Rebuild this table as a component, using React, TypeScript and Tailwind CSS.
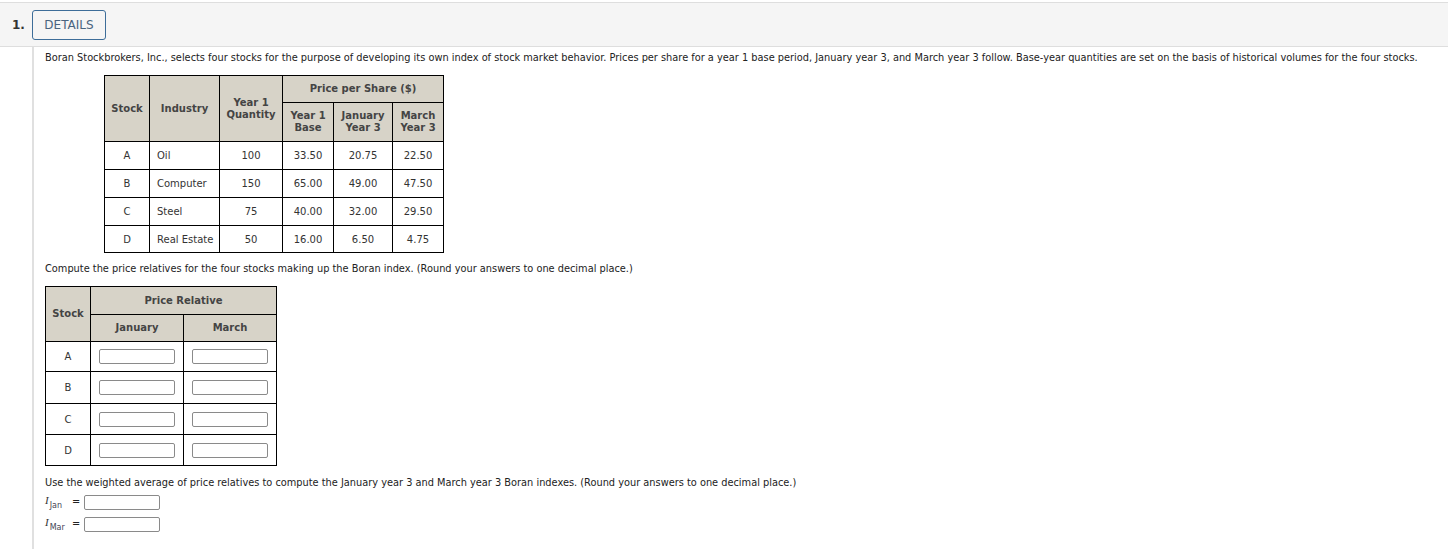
import React from "react";

const font = { fontFamily: '"DejaVu Sans", Verdana, sans-serif' };

const rows1 = [
  ["A", "Oil", "100", "33.50", "20.75", "22.50"],
  ["B", "Computer", "150", "65.00", "49.00", "47.50"],
  ["C", "Steel", "75", "40.00", "32.00", "29.50"],
  ["D", "Real Estate", "50", "16.00", "6.50", "4.75"],
];

const th = "border border-black bg-[#d7d3c8] text-[#444] font-bold text-center leading-[12px] p-0";
const td = "border border-black text-[#333] p-0";

function Box({ cls = "" }: { cls?: string }) {
  return <div className={"h-[15px] w-[76px] border border-[#8a8a8a] rounded-[2px] bg-white " + cls} />;
}

function Label({ sub }: { sub: string }) {
  return (
    <span className="w-[27px] text-[#333] flex items-start h-[16px]">
      <i className="text-[11px] leading-[12px]" style={{ fontFamily: '"Liberation Serif", serif' }}>I</i>
      <span className="text-[8px] leading-[8px] text-[#445] ml-[1px] translate-y-[8px] inline-block">{sub}</span>
    </span>
  );
}

export default function App() {
  return (
    <div className="w-[1448px] h-[549px] bg-white text-[9.8px] text-[#222] overflow-hidden" style={font}>
      <div className="pt-[2px]">
        <div className="h-[45px] bg-[#f5f5f5] border-t border-b border-[#dedede] flex items-center">
          <span className="ml-[12px] w-[20px] text-[12px] font-bold text-[#333]">1.</span>
          <div className="h-[30px] w-[74px] border border-[#3d6d99] rounded-[3px] flex items-center justify-center text-[12px] text-[#4a6480] bg-[#f5f5f5]">
            DETAILS
          </div>
        </div>
      </div>
      <div className="ml-[32px] border-l-2 border-[#e0e0e0] pl-[11px] pt-[5px] h-[503px]">
        <p className="leading-[12px]">
          Boran Stockbrokers, Inc., selects four stocks for the purpose of developing its own index of stock market behavior. Prices per share for a year 1 base period, January year 3, and March year 3 follow. Base-year quantities are set on the basis of historical volumes for the four stocks.
        </p>
        <table className="ml-[59px] mt-[11px] border-collapse text-[10px]">
          <thead>
            <tr className="h-[27px]">
              <th rowSpan={2} className={th + " w-[45px]"}>Stock</th>
              <th rowSpan={2} className={th + " w-[70px]"}>Industry</th>
              <th rowSpan={2} className={th + " w-[63px]"}>
                Year 1<br />Quantity
              </th>
              <th colSpan={3} className={th}>Price per Share ($)</th>
            </tr>
            <tr className="h-[39px]">
              <th className={th + " w-[51px]"}>
                Year 1<br />Base
              </th>
              <th className={th + " w-[59px]"}>
                January<br />Year 3
              </th>
              <th className={th + " w-[51px]"}>
                March<br />Year 3
              </th>
            </tr>
          </thead>
          <tbody>
            {rows1.map((r, i) => (
              <tr key={i} className={i === 3 ? "h-[27px]" : "h-[28px]"}>
                <td className={td + " text-center"}>{r[0]}</td>
                <td className={td + " text-left pl-[7px]"}>{r[1]}</td>
                <td className={td + " text-center"}>{r[2]}</td>
                <td className={td + " text-center"}>{r[3]}</td>
                <td className={td + " text-center"}>{r[4]}</td>
                <td className={td + " text-center"}>{r[5]}</td>
              </tr>
            ))}
          </tbody>
        </table>
        <p className="mt-[10px] leading-[12px]">
          Compute the price relatives for the four stocks making up the Boran index. (Round your answers to one decimal place.)
        </p>
        <table className="mt-[11px] border-collapse text-[10px]">
          <thead>
            <tr className="h-[28px]">
              <th rowSpan={2} className={th + " w-[45px]"}>Stock</th>
              <th colSpan={2} className={th}>Price Relative</th>
            </tr>
            <tr className="h-[27px]">
              <th className={th + " w-[93px]"}>January</th>
              <th className={th + " w-[93px]"}>March</th>
            </tr>
          </thead>
          <tbody>
            {["A", "B", "C", "D"].map((s, i) => (
              <tr key={s} className={i === 0 ? "h-[30px]" : i === 1 ? "h-[32px]" : "h-[31px]"}>
                <td className={td + " text-center"}>{s}</td>
                <td className={td}>
                  <div className="flex justify-center"><Box /></div>
                </td>
                <td className={td}>
                  <div className="flex justify-center"><Box /></div>
                </td>
              </tr>
            ))}
          </tbody>
        </table>
        <p className="mt-[11px] leading-[12px]">
          Use the weighted average of price relatives to compute the January year 3 and March year 3 Boran indexes. (Round your answers to one decimal place.)
        </p>
        <div className="mt-[5px] flex items-center h-[16px]">
          <Label sub="Jan" />
          <span className="w-[12px]">=</span>
          <Box />
        </div>
        <div className="mt-[6px] flex items-center h-[16px]">
          <Label sub="Mar" />
          <span className="w-[12px]">=</span>
          <Box />
        </div>
      </div>
    </div>
  );
}
